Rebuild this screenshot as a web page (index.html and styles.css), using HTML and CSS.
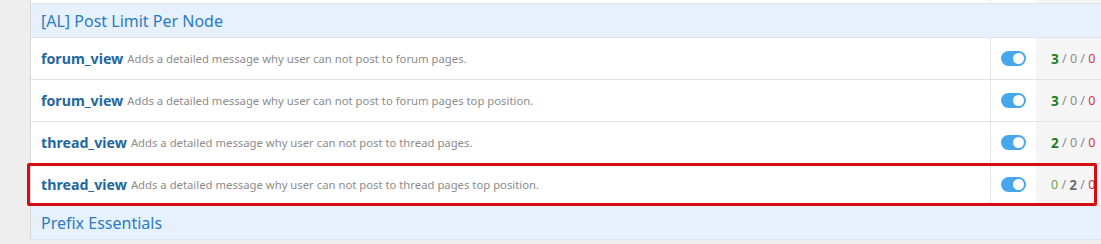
FILE: index.html
```html
<!DOCTYPE html>
<html lang="en">
<head>
    <meta charset="UTF-8">
    <title>Template Modifications</title>
    <link rel="stylesheet" href="styles.css">
</head>
<body>
    <div class="block">
        <!-- tail of the row above -->
        <div class="row row-tail">
            <div class="row-main"></div>
            <div class="row-toggle"></div>
            <div class="row-count"></div>
        </div>

        <h3 class="section-header">[AL] Post Limit Per Node</h3>

        <div class="row">
            <div class="row-main">
                <a class="row-title" href="#">forum_view</a>
                <span class="row-hint">Adds a detailed message why user can not post to forum pages.</span>
            </div>
            <div class="row-toggle"><span class="toggle is-on"></span></div>
            <div class="row-count"><b class="c-ok">3</b> / 0 / <span class="c-err">0</span></div>
        </div>

        <div class="row">
            <div class="row-main">
                <a class="row-title" href="#">forum_view</a>
                <span class="row-hint">Adds a detailed message why user can not post to forum pages top position.</span>
            </div>
            <div class="row-toggle"><span class="toggle is-on"></span></div>
            <div class="row-count"><b class="c-ok">3</b> / 0 / <span class="c-err">0</span></div>
        </div>

        <div class="row">
            <div class="row-main">
                <a class="row-title" href="#">thread_view</a>
                <span class="row-hint">Adds a detailed message why user can not post to thread pages.</span>
            </div>
            <div class="row-toggle"><span class="toggle is-on"></span></div>
            <div class="row-count"><b class="c-ok">2</b> / 0 / <span class="c-err">0</span></div>
        </div>

        <div class="row is-marked">
            <div class="row-main">
                <a class="row-title" href="#">thread_view</a>
                <span class="row-hint">Adds a detailed message why user can not post to thread pages top position.</span>
            </div>
            <div class="row-toggle"><span class="toggle is-on"></span></div>
            <div class="row-count"><span class="c-ok">0</span> / <b class="c-warn">2</b> / <span class="c-err">0</span></div>
            <div class="mark-box"></div>
        </div>

        <h3 class="section-header">Prefix Essentials</h3>
    </div>
</body>
</html>
```

FILE: styles.css
```css
/* Page */
body {
    margin: 0;
    background-color: #eeeeee;
    font-family: 'Segoe UI', 'Noto Sans', sans-serif;
    overflow: hidden;
}

.block {
    width: 1089px;
    margin-left: 30px;
    background-color: #fff;
    border-left: 1px solid #d8d8d8;
}

/* Section headers */
.section-header {
    margin: 0;
    height: 33px;
    padding-left: 10px;
    display: flex;
    align-items: center;
    background-color: #e6f1fb;
    border-bottom: 1px solid #dbe4ec;
    color: #2b7bbf;
    font-size: 16px;
    font-weight: 400;
}

/* Rows */
.row {
    display: flex;
    height: 41px;
    border-bottom: 1px solid #e3e3e3;
    position: relative;
}

.row-tail {
    height: 3px;
}

.row-main {
    flex: 1;
    display: flex;
    align-items: center;
    padding-left: 10px;
    white-space: nowrap;
}

.row-title {
    color: #22679e;
    font-weight: 700;
    font-size: 14.2px;
    text-decoration: none;
    margin-right: 4px;
}

.row-hint {
    color: #8c8c8c;
    font-size: 11.3px;
}

.row-toggle {
    width: 45px;
    border-left: 1px solid #e3e3e3;
    display: flex;
    align-items: center;
    justify-content: center;
}

.row-count {
    width: 69px;
    padding-left: 15px;
    background-color: #f5f5f5;
    display: flex;
    align-items: center;
    white-space: pre;
    color: #8c8c8c;
    font-size: 12.5px;
}

.row-count b {
    font-size: 13.5px;
}

.c-ok {
    color: #1a7d1a;
}

.row-count span.c-ok {
    color: #6aa447;
}

.c-warn {
    color: #6e6e6e;
}

.c-err {
    color: #d8333a;
}

/* Toggle switch */
.toggle {
    width: 25px;
    height: 15px;
    border-radius: 8px;
    background-color: #47a7eb;
    position: relative;
}

.toggle::after {
    content: '';
    position: absolute;
    top: 2px;
    right: 2px;
    width: 11px;
    height: 11px;
    border-radius: 50%;
    background-color: #fff;
}

/* Red annotation frame */
.mark-box {
    position: absolute;
    left: -4px;
    right: 23px;
    top: -1px;
    bottom: -1px;
    border: 3px solid #d40d12;
    border-radius: 2px;
    pointer-events: none;
}
```
